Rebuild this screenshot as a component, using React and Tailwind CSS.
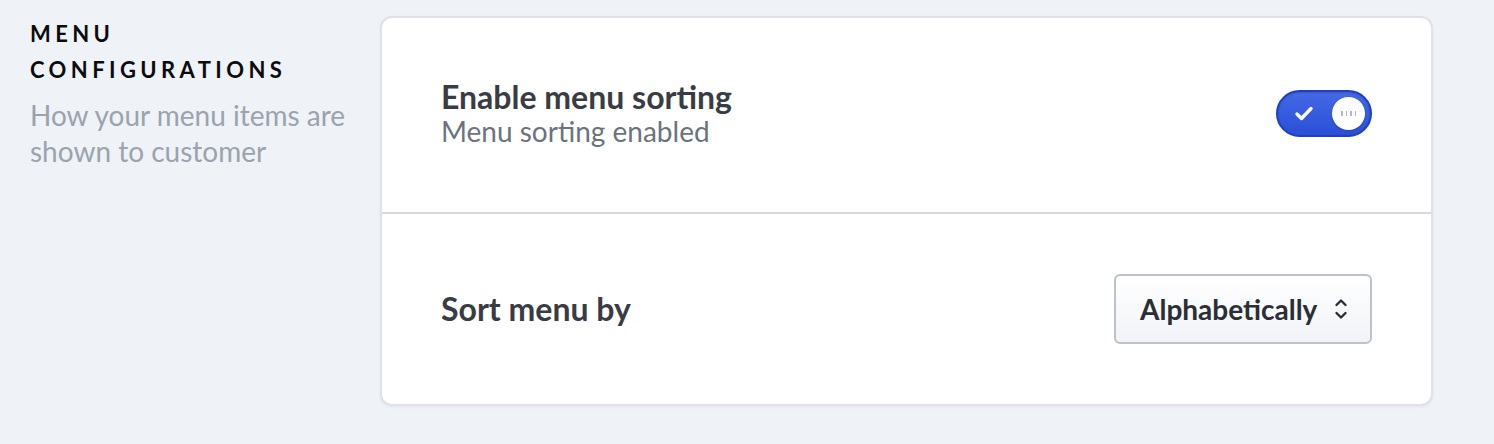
import React from 'react';

const Toggle = () => (
  <button
    type="button"
    className="relative flex items-center w-[96px] h-[47px] rounded-full border-2 border-[#1f3fc4] bg-gradient-to-b from-[#4468e6] to-[#2a4fd6] shadow-[inset_0_1px_2px_rgba(0,0,0,0.15)]"
  >
    <svg className="absolute left-[16px] top-[13px]" width="20" height="17" viewBox="0 0 20 17" fill="none">
      <path d="M3 9l4.5 4.5L17 3.5" stroke="white" strokeWidth="3.4" strokeLinecap="round" strokeLinejoin="round" />
    </svg>
    <span className="absolute right-[5px] top-[5px] w-[33px] h-[33px] rounded-full bg-white flex items-center justify-center gap-[3px] shadow-[0_1px_2px_rgba(0,0,0,0.2)]">
      <span className="w-[1.5px] h-[5px] bg-[#b3b8bf]" />
      <span className="w-[1.5px] h-[5px] bg-[#b3b8bf]" />
      <span className="w-[1.5px] h-[5px] bg-[#b3b8bf]" />
      <span className="w-[1.5px] h-[5px] bg-[#b3b8bf]" />
    </span>
  </button>
);

const SortSelect = () => (
  <button
    type="button"
    className="flex items-center justify-between w-[258px] h-[70px] pl-[24px] pr-[22px] rounded-[6px] border-2 border-[#bcc2ca] bg-gradient-to-b from-white to-[#f1f3f7] text-[28px] font-bold text-[#2b2e35]"
  >
    <span>Alphabetically</span>
    <svg width="14" height="24" viewBox="0 0 14 24" fill="none">
      <path d="M2.5 8L7 3.5L11.5 8" stroke="#2b2e35" strokeWidth="2.4" strokeLinecap="round" strokeLinejoin="round" />
      <path d="M2.5 16L7 20.5L11.5 16" stroke="#2b2e35" strokeWidth="2.4" strokeLinecap="round" strokeLinejoin="round" />
    </svg>
  </button>
);

export default function App() {
  return (
    <div
      className="w-full h-[444px] bg-[#eff2f7] flex pl-[30px] pr-[61px] pt-[16px]"
      style={{ fontFamily: 'Lato, "Open Sans", sans-serif' }}
    >
      {/* Section info */}
      <div className="w-[350px] shrink-0">
        <h2 className="text-[22px] leading-[36px] font-bold tracking-[0.2em] text-[#0b0c0e] uppercase">
          Menu
          <br />
          Configurations
        </h2>
        <p className="mt-[9px] text-[28px] leading-[36px] text-[#9ba3ad]">
          How your menu items are shown to customer
        </p>
      </div>

      {/* Card */}
      <div className="flex-1 h-[390px] bg-white rounded-[12px] border-2 border-[#dfe2e7] shadow-[0_1px_3px_rgba(0,0,0,0.06)] flex flex-col">
        <div className="flex-1 flex items-center justify-between px-[59px] pb-[4px]">
          <div>
            <div className="text-[32px] leading-[36px] font-bold text-[#393c43]">Enable menu sorting</div>
            <div className="text-[28px] leading-[32px] text-[#6b737d]">Menu sorting enabled</div>
          </div>
          <Toggle />
        </div>
        <div className="h-[2px] bg-[#d6dae0]" />
        <div className="flex-1 flex items-center justify-between px-[59px]">
          <div className="text-[32px] font-bold text-[#393c43]">Sort menu by</div>
          <SortSelect />
        </div>
      </div>
    </div>
  );
}
